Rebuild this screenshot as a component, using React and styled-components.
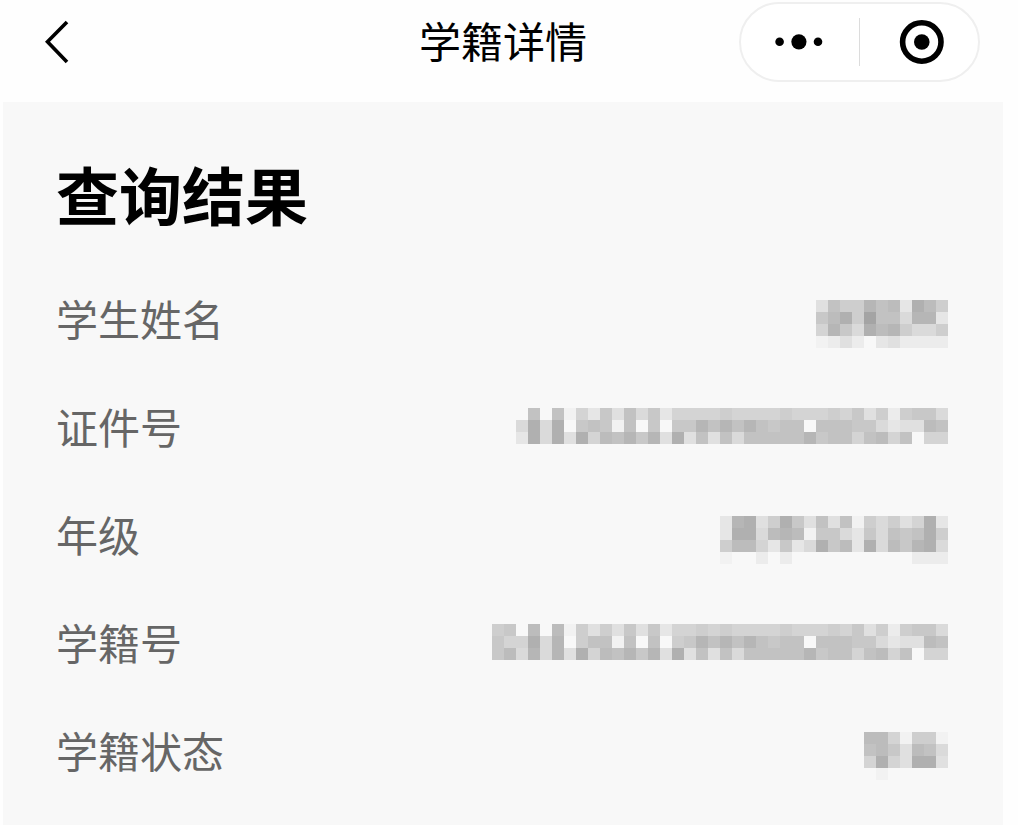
import React from 'react';
import styled, { createGlobalStyle } from 'styled-components';

const GlobalStyle = createGlobalStyle`
    * {
        box-sizing: border-box;
    }

    body {
        margin: 0;
        background: #fefefe;
        font-family: 'Noto Sans CJK SC', 'Noto Sans', sans-serif;
        color: #000;
    }
`;

const Page = styled.div`
    display: flex;
    flex-direction: column;
    min-height: 100vh;
    padding: 0 15px 0 3px;
`;

const NavBar = styled.header`
    display: grid;
    grid-template-columns: 1fr auto 1fr;
    align-items: center;
    padding: 2px 23px 20px;
`;

const NavTitle = styled.div`
    padding-bottom: 4px;
    font-size: 42px;
    line-height: 48px;
    white-space: nowrap;
`;

const IconButton = styled.button`
    display: flex;
    align-items: center;
    justify-content: center;
    width: ${({ $width }) => $width}px;
    height: ${({ $height }) => $height}px;
    padding: 0;
    border: none;
    background: transparent;
    color: inherit;
    cursor: pointer;
`;

const Capsule = styled.div`
    display: flex;
    align-items: center;
    justify-self: end;
    height: 80px;
    border: 2px solid #efefef;
    border-radius: 40px;
    background: #fff;
`;

const Divider = styled.span`
    width: 1px;
    height: 48px;
    background: #dcdcdc;
`;

const Panel = styled.main`
    flex: 1;
    padding: 62px 55px 45px 53px;
    background: #f8f8f8;
`;

const Heading = styled.h1`
    margin: 0 0 78px;
    font-size: 63px;
    font-weight: 700;
    line-height: 58px;
`;

const Details = styled.dl`
    display: flex;
    flex-direction: column;
    gap: 60px;
    margin: 0;
`;

const DetailRow = styled.div`
    display: flex;
    align-items: flex-start;
    justify-content: space-between;
    height: 48px;
`;

const Label = styled.dt`
    color: #666;
    font-size: 42px;
    line-height: 36px;
    white-space: nowrap;
`;

const Value = styled.dd`
    display: flex;
    margin: 0;
`;

const CELL = 12;

// every hex digit is one block: 0 is the panel colour, f the darkest grey
const details = [
    {
        label: '学生姓名',
        mask: ['4977b9a3ca7', '8ac7e995bb3', '6b85cab7557', '12420342222'],
    },
    {
        label: '证件号',
        mask: [
            '090916384958366667666676667684727885',
            '5c5c08981908088b9b9b98990999885344a9',
            '3c5c4c6a9b8b4c4949599999b89969a69066',
        ],
    },
    {
        label: '年级',
        mask: [
            '3bc47c84949175746c3',
            '3cc5aba1885385989c7',
            '7aa63835c8a3c5a8bc5',
            '1002020000000000222',
        ],
    },
    {
        label: '学籍号',
        mask: [
            '780a0a17474848366767666676667684727885',
            '866c5b07991909078b9b9b98990999885344a9',
            '8a5b5b4c6a9b8b4c4949599999b89969a69066',
        ],
    },
    {
        label: '学籍状态',
        mask: ['aa61771', '9a84a95', '6c64cc4', '0100000'],
    },
];

const shade = (digit) => {
    const v = 248 - parseInt(digit, 16) * 6;
    return `rgb(${v}, ${v}, ${v})`;
};

const Mosaic = ({ rows }) => {
    const width = rows[0].length * CELL;
    const height = rows.length * CELL;

    return (
        <svg
            width={width}
            height={height}
            viewBox={`0 0 ${width} ${height}`}
            shapeRendering="crispEdges"
            role="img"
            aria-label="已隐藏"
        >
            {rows.map((row, y) =>
                [...row].map((digit, x) => (
                    <rect
                        key={`${x}-${y}`}
                        x={x * CELL}
                        y={y * CELL}
                        width={CELL}
                        height={CELL}
                        fill={shade(digit)}
                    />
                ))
            )}
        </svg>
    );
};

const App = () => (
    <>
        <GlobalStyle />
        <Page>
            <NavBar>
                <IconButton $width={60} $height={60} aria-label="返回">
                    <svg width="60" height="60" viewBox="0 0 60 60" fill="none">
                        <path d="M41 10 L21.5 29.8 L41 50" stroke="#000" strokeWidth="3.6" />
                    </svg>
                </IconButton>
                <NavTitle>学籍详情</NavTitle>
                <Capsule>
                    <IconButton $width={118} $height={76} aria-label="更多">
                        <svg width="60" height="24" viewBox="0 0 60 24">
                            <circle cx="9.6" cy="11.8" r="4.3" />
                            <circle cx="28.9" cy="11.8" r="7.6" />
                            <circle cx="48" cy="11.8" r="4.3" />
                        </svg>
                    </IconButton>
                    <Divider />
                    <IconButton $width={118} $height={76} aria-label="关闭">
                        <svg width="52" height="48" viewBox="0 0 52 48">
                            <circle cx="28.8" cy="24" r="19.2" fill="none" stroke="#000" strokeWidth="5.6" />
                            <circle cx="28.8" cy="24" r="7.8" />
                        </svg>
                    </IconButton>
                </Capsule>
            </NavBar>
            <Panel>
                <Heading>查询结果</Heading>
                <Details>
                    {details.map(({ label, mask }) => (
                        <DetailRow key={label}>
                            <Label>{label}</Label>
                            <Value>
                                <Mosaic rows={mask} />
                            </Value>
                        </DetailRow>
                    ))}
                </Details>
            </Panel>
        </Page>
    </>
);

export default App;
